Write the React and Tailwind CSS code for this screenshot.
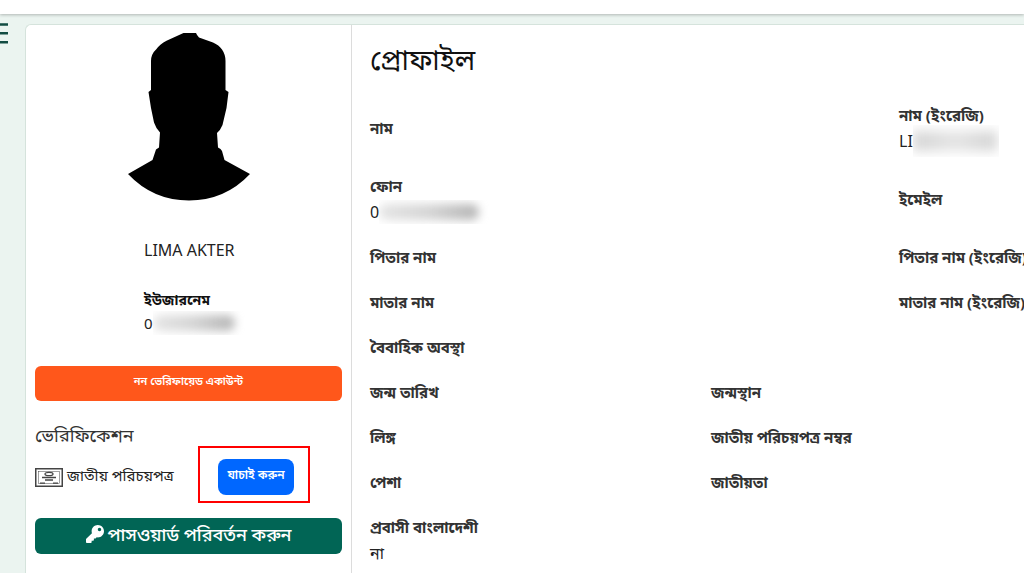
import { FaKey } from 'react-icons/fa';

const detailRows = [
  {
    left: { label: 'নাম' },
    right: { label: 'নাম (ইংরেজি)', value: 'LI', hidden: 'wide' },
    tall: true,
  },
  {
    left: { label: 'ফোন', value: '0', hidden: 'normal' },
    right: { label: 'ইমেইল' },
    tall: true,
  },
  { left: { label: 'পিতার নাম' }, right: { label: 'পিতার নাম (ইংরেজি)' } },
  { left: { label: 'মাতার নাম' }, right: { label: 'মাতার নাম (ইংরেজি)' } },
  { left: { label: 'বৈবাহিক অবস্থা' } },
  { left: { label: 'জন্ম তারিখ' }, middle: { label: 'জন্মস্থান' } },
  { left: { label: 'লিঙ্গ' }, middle: { label: 'জাতীয় পরিচয়পত্র নম্বর' } },
  { left: { label: 'পেশা' }, middle: { label: 'জাতীয়তা' } },
  { left: { label: 'প্রবাসী বাংলাদেশী', value: 'না' } },
];

function MenuIcon() {
  return (
    <svg width="24" height="21" viewBox="0 0 24 21" fill="none" stroke="#124c42" strokeWidth="2.6">
      <path d="M0 1.500h24M0 10.300h24M0 19.200h24" />
    </svg>
  );
}

function Avatar() {
  return (
    <svg width="122" height="168" viewBox="0 0 122 168" role="img" aria-label="LIMA AKTER">
      <path d="M55.500 0h12.500q1 2.500 3 4.500l14 5q6 2.500 9 7 3.500 5 3.500 11.500v29l3 2-2 16-4 17q-2 5-5.500 8l1 14.500q3 1 4 3.500l2.500 9 25.500 14Q97 167.500 61 167.500T0 141L24.500 127l3.500-10.500 3-2 1-15q-4-4-6-10L23 75l-2.500-16 2.500-2V28q0-7 5.500-12Q32 11 38.500 7.700z" />
    </svg>
  );
}

function CardIcon() {
  return (
    <svg width="28" height="19" viewBox="0 0 28 19" fill="none" stroke="#444" className="shrink-0">
      <rect x=".75" y=".75" width="26.500" height="17.500" strokeWidth="1.500" />
      <rect x="3.500" y="3.500" width="21" height="12" strokeWidth=".5" />
      <ellipse cx="14" cy="6" rx="4" ry="1.700" strokeWidth="1.300" />
      <path d="M7 9.500h14M10 12h8" strokeWidth="1.300" />
      <path d="M5 15.200h5M18 15.200h5" strokeWidth="1.300" />
    </svg>
  );
}

// Soft grey patch that covers private values
function Hidden({ size }) {
  if (size === 'wide') {
    return (
      <span className="h-8 w-[86px] overflow-hidden pt-[6px]">
        <span className="block h-5 w-[84px] bg-linear-to-r from-neutral-300 via-neutral-200 to-neutral-300 blur-[6px]" />
      </span>
    );
  }
  return (
    <span className={`h-6 overflow-hidden pt-1 ${size === 'small' ? 'w-24' : 'w-28'}`}>
      <span
        className={`block h-4 rounded-full bg-linear-to-r from-neutral-200 via-neutral-300 to-neutral-400/80 blur-[5px] ${size === 'small' ? 'w-[82px]' : 'w-[100px]'}`}
      />
    </span>
  );
}

function Field({ label, value, hidden, className = '' }) {
  return (
    <div className={`min-w-0 whitespace-nowrap ${className}`}>
      <dt className="text-[15px] leading-[26px] font-bold text-[#333]">{label}</dt>
      {value && (
        <dd className="flex h-[26px] items-center text-base text-[#222]">
          {value}
          {hidden && <Hidden size={hidden} />}
        </dd>
      )}
    </div>
  );
}

function Sidebar() {
  return (
    <aside className="flex w-[326px] shrink-0 flex-col border-r border-[#dcdcdc] px-[9px] pt-2">
      <div className="flex justify-center">
        <Avatar />
      </div>

      <div className="mt-[35px] ml-[109px]">
        <p className="text-base leading-7 text-[#222]">LIMA AKTER</p>
        <p className="mt-6 text-sm leading-6 font-bold text-[#111]">ইউজারনেম</p>
        <p className="flex h-[22px] items-center text-[15px] text-[#222]">
          0<Hidden size="small" />
        </p>
      </div>

      <button className="mt-8 h-[35px] rounded-md bg-[#ff571b] pb-1 text-[11px] font-semibold text-white">
        নন ভেরিফায়েড একাউন্ট
      </button>

      <h2 className="mt-5 text-lg leading-7 text-[#333]">ভেরিফিকেশন</h2>
      <div className="mt-[10px] flex h-9 items-center">
        <CardIcon />
        <span className="ml-1 w-[151px] pb-1 text-[15px] whitespace-nowrap text-[#222]">
          জাতীয় পরিচয়পত্র
        </span>
        <div className="relative">
          <button className="h-9 w-[76px] rounded-lg bg-[#0067ff] pb-1 text-xs font-semibold whitespace-nowrap text-white">
            যাচাই করুন
          </button>
          <div className="pointer-events-none absolute -top-[13px] -right-4 -bottom-2 -left-5 border-2 border-[#ff0000]" />
        </div>
      </div>

      <button className="mt-[23px] flex h-9 items-center justify-center gap-1 rounded-md bg-[#016555] pb-1 text-lg font-medium text-white">
        <FaKey />
        পাসওয়ার্ড পরিবর্তন করুন
      </button>
    </aside>
  );
}

export default function App() {
  return (
    <div className="h-screen overflow-hidden bg-[#ebf4f0] font-['Noto_Sans','Noto_Sans_Bengali',sans-serif]">
      <header className="h-[14px] bg-white shadow-[0_1px_3px_rgba(0,0,0,0.25)]" />

      <div className="flex">
        <div className="w-[25px] shrink-0 overflow-hidden pt-[9px]">
          <button aria-label="মেনু" className="-ml-4 block">
            <MenuIcon />
          </button>
        </div>

        <main className="mt-[10px] flex min-h-screen min-w-0 flex-1 rounded-tl-md border-t border-l border-[#d5e3dc] bg-white">
          <Sidebar />

          <section className="min-w-0 flex-1 overflow-hidden pl-[18px]">
            <h1 className="mt-[14px] text-[28px] leading-10 text-[#111]">প্রোফাইল</h1>
            <dl className="mt-[14px]">
              {detailRows.map((row) => (
                <div
                  key={row.left.label}
                  className={`grid grid-cols-[341fr_188fr_125fr] items-center pt-[9px] pb-[10px] ${row.tall ? 'min-h-[71px]' : ''}`}
                >
                  <Field {...row.left} />
                  {row.middle && <Field {...row.middle} className="col-span-2" />}
                  {row.right && <Field {...row.right} className="col-start-3" />}
                </div>
              ))}
            </dl>
          </section>
        </main>
      </div>
    </div>
  );
}
